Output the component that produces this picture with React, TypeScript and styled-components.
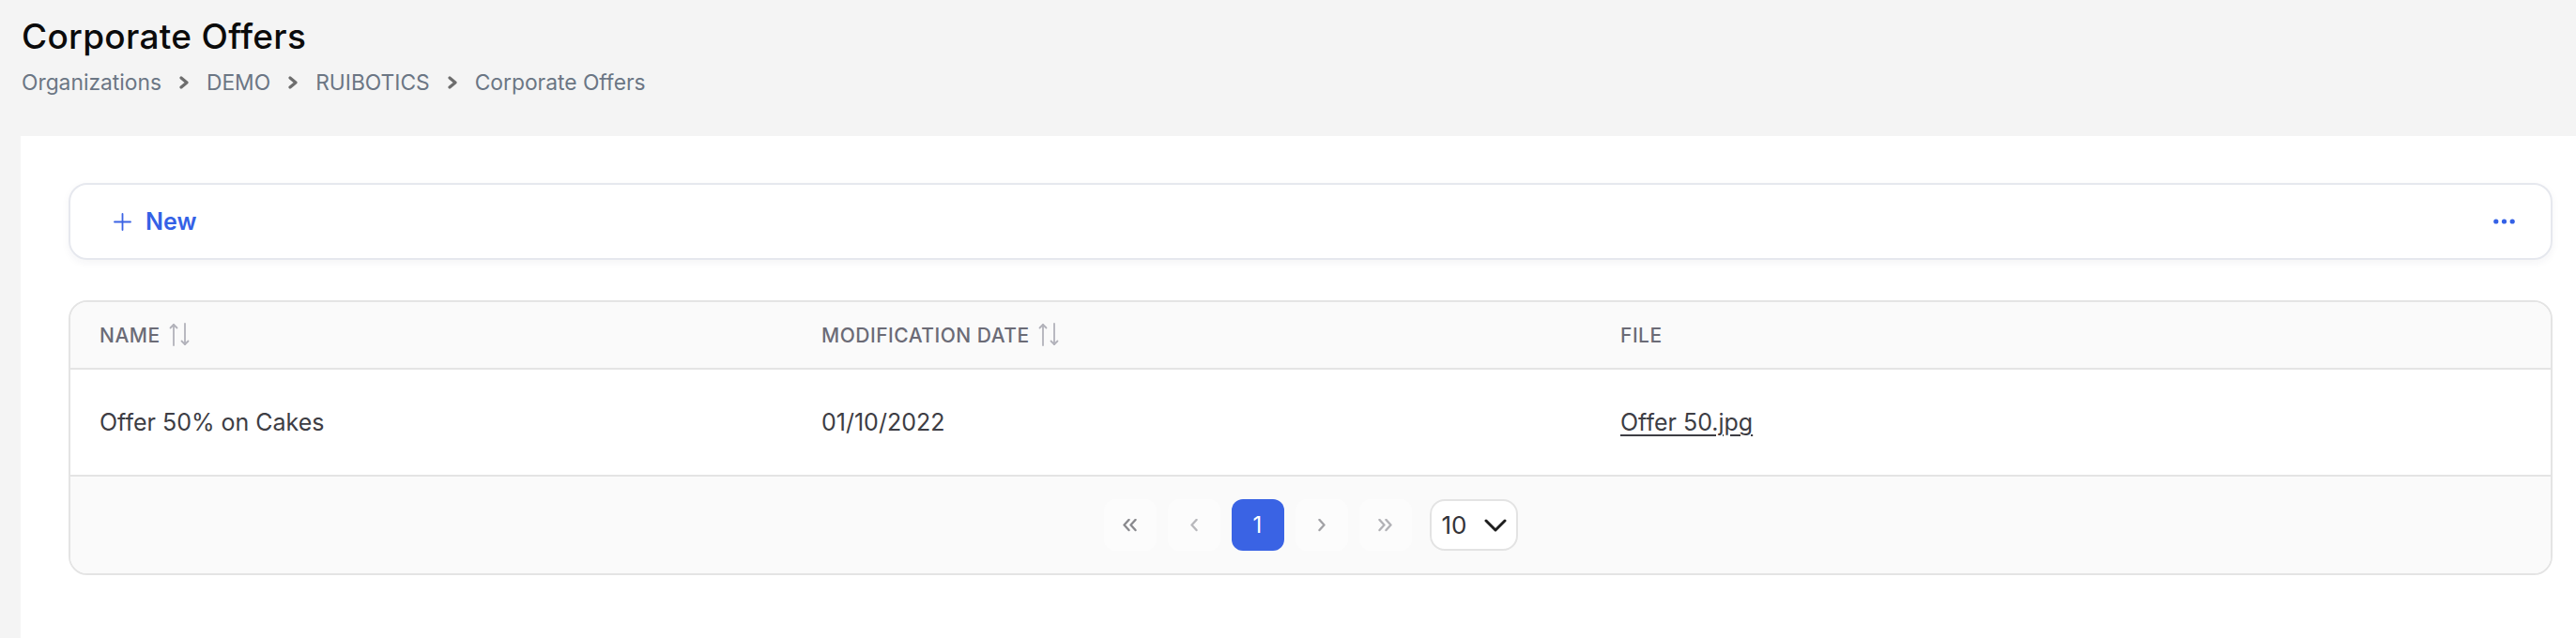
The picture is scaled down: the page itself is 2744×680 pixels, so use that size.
import React from "react";
import styled, { createGlobalStyle } from "styled-components";

const GlobalStyle = createGlobalStyle`
  html, body {
    margin: 0;
    padding: 0;
    background: #f4f4f4;
    font-family: Inter, "Noto Sans", "Liberation Sans", sans-serif;
    -webkit-font-smoothing: antialiased;
  }
  * { box-sizing: border-box; }
`;

const Page = styled.div`
  min-height: 680px;
  display: flex;
  flex-direction: column;
`;

const PageHeader = styled.header`
  padding: 18px 0 43px 23px;
`;

const Title = styled.h1`
  margin: 0;
  font-size: 37px;
  line-height: 41px;
  font-weight: 500;
  color: #0b0b0b;
  letter-spacing: 0.3px;
`;

const Breadcrumb = styled.nav`
  margin-top: 15px;
  display: flex;
  align-items: center;
  gap: 18px;
  font-size: 22.8px;
  line-height: 28px;
  color: #6b7684;
`;

const Crumb = styled.span`
  white-space: nowrap;
`;

const Panel = styled.main`
  flex: 1;
  margin-left: 22px;
  background: #ffffff;
  padding: 50px 25px 40px 51px;
  display: flex;
  flex-direction: column;
  gap: 43px;
`;

const Toolbar = styled.div`
  height: 82px;
  border: 2px solid #e6e8ee;
  border-radius: 20px;
  box-shadow: 0 3px 8px rgba(30, 40, 80, 0.05);
  display: flex;
  align-items: center;
  justify-content: space-between;
  padding: 0 38px 0 46px;
`;

const NewButton = styled.button`
  display: flex;
  align-items: center;
  gap: 15px;
  border: 0;
  background: none;
  padding: 0;
  font-family: inherit;
  font-size: 25px;
  font-weight: 600;
  color: #3461e6;
  cursor: pointer;
`;

const MoreButton = styled.button`
  display: flex;
  border: 0;
  background: none;
  padding: 0;
  cursor: pointer;
`;

const TableCard = styled.section`
  border: 2px solid #e4e4e4;
  border-radius: 20px;
  overflow: hidden;
`;

const Table = styled.table`
  width: 100%;
  border-collapse: collapse;
  table-layout: fixed;
`;

const HeadCell = styled.th`
  height: 71px;
  padding: 0 0 0 31px;
  background: #fafafa;
  border-bottom: 2px solid #e4e4e4;
  text-align: left;
  font-size: 21px;
  font-weight: 500;
  color: #6b6b76;
  text-transform: uppercase;
  letter-spacing: 0.5px;
`;

const HeadLabel = styled.span`
  display: inline-flex;
  align-items: center;
  gap: 9px;
`;

const BodyCell = styled.td`
  height: 114px;
  padding: 0 0 0 31px;
  border-bottom: 2px solid #e4e4e4;
  font-size: 25px;
  color: #3d3d44;
`;

const FileLink = styled.a`
  color: #3d3d44;
  text-decoration: underline;
  text-decoration-thickness: 2px;
  text-underline-offset: 4px;
`;

const Footer = styled.div`
  height: 103px;
  background: #fafafa;
  display: flex;
  align-items: center;
  justify-content: center;
  gap: 12px;
`;

const PageButton = styled.button<{ $active?: boolean }>`
  width: 56px;
  height: 55px;
  border: 0;
  border-radius: 12px;
  background: ${(p) => (p.$active ? "#3a63e4" : "#fcfcfc")};
  color: ${(p) => (p.$active ? "#ffffff" : "#999")};
  font-family: inherit;
  font-size: 24px;
  display: flex;
  align-items: center;
  justify-content: center;
  padding: 0;
  cursor: pointer;
`;

const SizeSelect = styled.button`
  margin-left: 7px;
  width: 94px;
  height: 55px;
  border: 2px solid #e3e3e3;
  border-radius: 16px;
  background: #ffffff;
  display: flex;
  align-items: center;
  gap: 19px;
  padding: 0 0 0 11px;
  font-family: inherit;
  font-size: 26px;
  color: #333338;
  cursor: pointer;
`;

const ChevronRight = () => (
  <svg width="12" height="14" viewBox="0 0 12 14">
    <polyline points="3,2 9,7 3,12" fill="none" stroke="#6d6d6d" strokeWidth="3.2" strokeLinejoin="round" strokeLinecap="round" />
  </svg>
);

const SortIcon = () => (
  <svg width="23" height="26" viewBox="0 0 23 26">
    <g fill="none" stroke="#b2b2ba" strokeWidth="1.8" strokeLinecap="round" strokeLinejoin="round">
      <line x1="5" y1="24" x2="5" y2="2" />
      <polyline points="1.5,5.5 5,2 8.5,5.5" />
      <line x1="17" y1="1" x2="17" y2="23" />
      <polyline points="13.5,19.5 17,23 20.5,19.5" />
    </g>
  </svg>
);

const PlusIcon = () => (
  <svg width="19" height="19" viewBox="0 0 19 19">
    <g stroke="#3b63e4" strokeWidth="1.8" strokeLinecap="round">
      <line x1="9.5" y1="1" x2="9.5" y2="18" />
      <line x1="1" y1="9.5" x2="18" y2="9.5" />
    </g>
  </svg>
);

const DotsIcon = () => (
  <svg width="23" height="6" viewBox="0 0 23 6">
    <g fill="#3461e6">
      <circle cx="2.8" cy="3" r="2.6" />
      <circle cx="11.5" cy="3" r="2.6" />
      <circle cx="20.2" cy="3" r="2.6" />
    </g>
  </svg>
);

const Chevrons = ({ dir, double, color }: { dir: "left" | "right"; double?: boolean; color: string }) => {
  const one = dir === "left" ? "6,1 1,6.5 6,12" : "1,1 6,6.5 1,12";
  const two = dir === "left" ? "13,1 8,6.5 13,12" : "8,1 13,6.5 8,12";
  return (
    <svg width={double ? 15 : 8} height="14" viewBox={double ? "-0.5 0 15 14" : "-0.5 0 8 14"}>
      <g fill="none" stroke={color} strokeWidth="2.4" strokeLinecap="round" strokeLinejoin="round">
        <polyline points={one} />
        {double && <polyline points={two} />}
      </g>
    </svg>
  );
};

const ChevronDown = () => (
  <svg width="24" height="14" viewBox="0 0 24 14">
    <polyline points="2,2 12,12 22,2" fill="none" stroke="#1e1e1e" strokeWidth="3" strokeLinecap="round" strokeLinejoin="round" />
  </svg>
);

const crumbs = ["Organizations", "DEMO", "RUIBOTICS", "Corporate Offers"];

const offers = [{ name: "Offer 50% on Cakes", date: "01/10/2022", file: "Offer 50.jpg" }];

export default function App() {
  return (
    <>
      <GlobalStyle />
      <Page>
        <PageHeader>
          <Title>Corporate Offers</Title>
          <Breadcrumb>
            {crumbs.map((c, i) => (
              <React.Fragment key={c}>
                {i > 0 && <ChevronRight />}
                <Crumb>{c}</Crumb>
              </React.Fragment>
            ))}
          </Breadcrumb>
        </PageHeader>

        <Panel>
          <Toolbar>
            <NewButton>
              <PlusIcon />
              New
            </NewButton>
            <MoreButton aria-label="More actions">
              <DotsIcon />
            </MoreButton>
          </Toolbar>

          <TableCard>
            <Table>
              <colgroup>
                <col style={{ width: 769 }} />
                <col style={{ width: 851 }} />
                <col />
              </colgroup>
              <thead>
                <tr>
                  <HeadCell>
                    <HeadLabel>
                      Name <SortIcon />
                    </HeadLabel>
                  </HeadCell>
                  <HeadCell>
                    <HeadLabel>
                      Modification date <SortIcon />
                    </HeadLabel>
                  </HeadCell>
                  <HeadCell>File</HeadCell>
                </tr>
              </thead>
              <tbody>
                {offers.map((o) => (
                  <tr key={o.name}>
                    <BodyCell>{o.name}</BodyCell>
                    <BodyCell>{o.date}</BodyCell>
                    <BodyCell>
                      <FileLink href="#">{o.file}</FileLink>
                    </BodyCell>
                  </tr>
                ))}
              </tbody>
            </Table>
            <Footer>
              <PageButton aria-label="First page">
                <Chevrons dir="left" double color="#8a8a8e" />
              </PageButton>
              <PageButton aria-label="Previous page">
                <Chevrons dir="left" color="#b8b8bc" />
              </PageButton>
              <PageButton $active>1</PageButton>
              <PageButton aria-label="Next page">
                <Chevrons dir="right" color="#a2a2a6" />
              </PageButton>
              <PageButton aria-label="Last page">
                <Chevrons dir="right" double color="#b2b2b6" />
              </PageButton>
              <SizeSelect>
                10
                <ChevronDown />
              </SizeSelect>
            </Footer>
          </TableCard>
        </Panel>
      </Page>
    </>
  );
}
